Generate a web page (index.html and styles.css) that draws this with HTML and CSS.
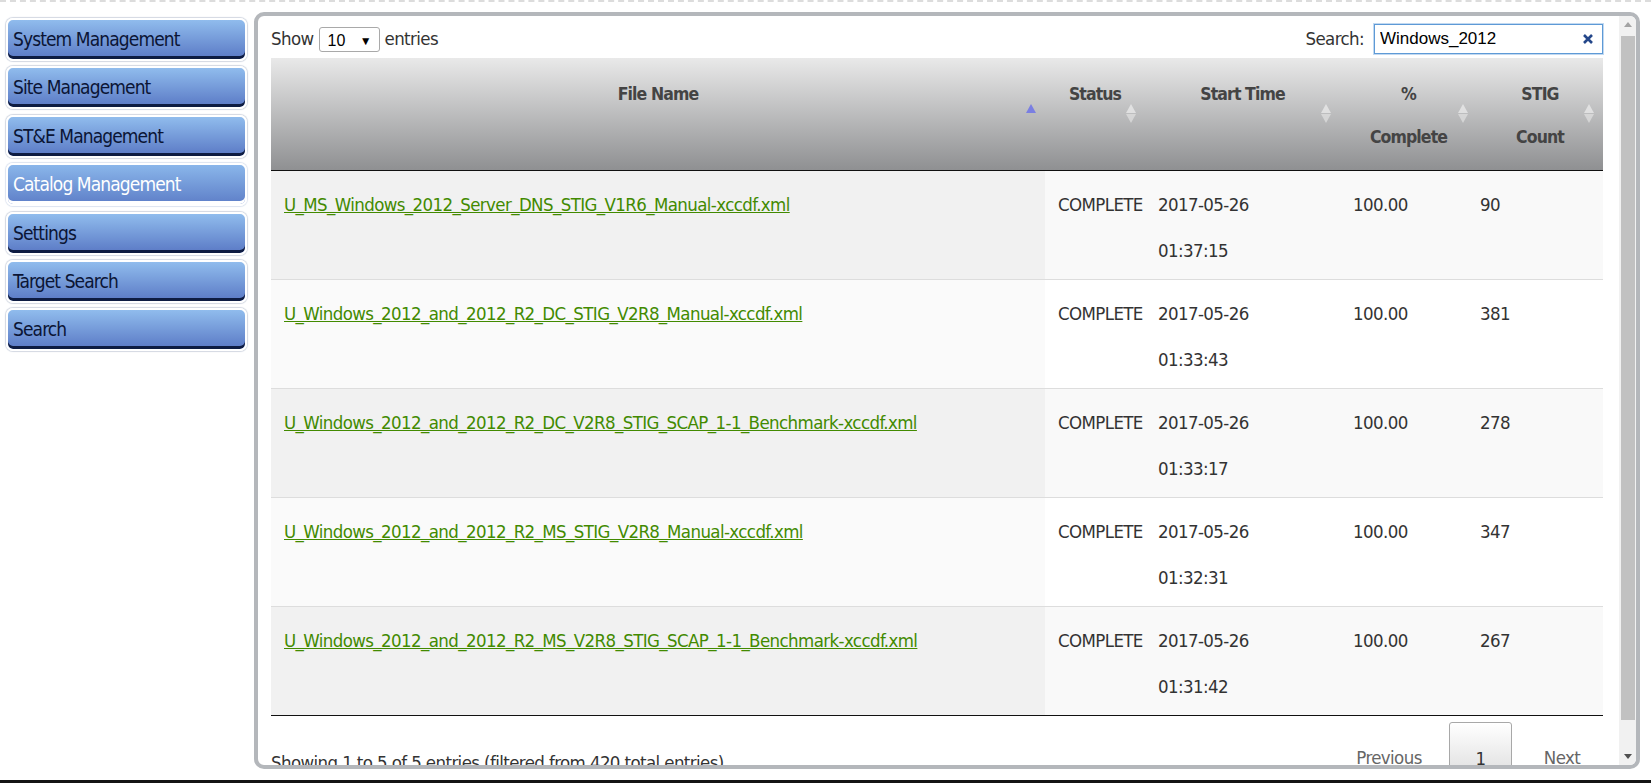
FILE: index.html
```html
<!DOCTYPE html>
<html>
<head>
<meta charset="utf-8">
<title>Catalog Management</title>
<link rel="stylesheet" href="styles.css">
</head>
<body>
<div class="page">
  <div class="topline"></div>
  <div class="layout">
    <nav class="sidebar">
      <a class="nav-btn">System Management</a>
      <a class="nav-btn">Site Management</a>
      <a class="nav-btn">ST&amp;E Management</a>
      <a class="nav-btn active">Catalog Management</a>
      <a class="nav-btn">Settings</a>
      <a class="nav-btn">Target Search</a>
      <a class="nav-btn">Search</a>
    </nav>
    <section class="panel">
      <div class="panel-content">
        <div class="controls">
          <div class="length">Show <span class="select"><span class="select-val">10</span><span class="caret">&#9660;</span></span> entries</div>
          <div class="filter">
            <span>Search:</span>
            <div class="search-box">
              <input class="search-input" type="text" value="Windows_2012">
              <svg class="clear" width="12" height="12" viewBox="0 0 12 12"><path d="M2 2 L10 10 M10 2 L2 10" stroke="#24478a" stroke-width="2.6" stroke-linecap="butt"/></svg>
            </div>
          </div>
        </div>
        <table class="grid">
          <colgroup>
            <col class="c-file"><col class="c-status"><col class="c-start"><col class="c-pct"><col class="c-count">
          </colgroup>
          <thead>
            <tr>
              <th>File Name<span class="sort asc"></span></th>
              <th>Status<span class="sort both"></span></th>
              <th>Start Time<span class="sort both"></span></th>
              <th>%<br>Complete<span class="sort both"></span></th>
              <th>STIG<br>Count<span class="sort both"></span></th>
            </tr>
          </thead>
          <tbody>
            <tr class="odd">
              <td class="sorted"><a href="#">U_MS_Windows_2012_Server_DNS_STIG_V1R6_Manual-xccdf.xml</a></td>
              <td>COMPLETE</td>
              <td>2017-05-26<br>01:37:15</td>
              <td>100.00</td>
              <td class="count">90</td>
            </tr>
            <tr class="even">
              <td class="sorted"><a href="#">U_Windows_2012_and_2012_R2_DC_STIG_V2R8_Manual-xccdf.xml</a></td>
              <td>COMPLETE</td>
              <td>2017-05-26<br>01:33:43</td>
              <td>100.00</td>
              <td class="count">381</td>
            </tr>
            <tr class="odd">
              <td class="sorted"><a href="#">U_Windows_2012_and_2012_R2_DC_V2R8_STIG_SCAP_1-1_Benchmark-xccdf.xml</a></td>
              <td>COMPLETE</td>
              <td>2017-05-26<br>01:33:17</td>
              <td>100.00</td>
              <td class="count">278</td>
            </tr>
            <tr class="even">
              <td class="sorted"><a href="#">U_Windows_2012_and_2012_R2_MS_STIG_V2R8_Manual-xccdf.xml</a></td>
              <td>COMPLETE</td>
              <td>2017-05-26<br>01:32:31</td>
              <td>100.00</td>
              <td class="count">347</td>
            </tr>
            <tr class="odd">
              <td class="sorted"><a href="#">U_Windows_2012_and_2012_R2_MS_V2R8_STIG_SCAP_1-1_Benchmark-xccdf.xml</a></td>
              <td>COMPLETE</td>
              <td>2017-05-26<br>01:31:42</td>
              <td>100.00</td>
              <td class="count">267</td>
            </tr>
          </tbody>
        </table>
        <div class="table-footer">
          <div class="info">Showing 1 to 5 of 5 entries (filtered from 420 total entries)</div>
          <div class="paginate">
            <span class="pg pg-prev">Previous</span>
            <span class="pg pg-current">1</span>
            <span class="pg pg-next">Next</span>
          </div>
        </div>
      </div>
      <div class="scrollbar">
        <div class="sb-arrow sb-up"></div>
        <div class="sb-track"><div class="sb-thumb"></div></div>
        <div class="sb-arrow sb-down"></div>
      </div>
    </section>
  </div>
  <div class="bottombar"></div>
</div>
</body>
</html>
```
FILE: styles.css
```css
html, body {
  margin: 0;
  padding: 0;
  background: #fff;
}
body {
  font-family: "Liberation Sans Narrow", "DejaVu Sans Condensed", "Liberation Sans", sans-serif;
  color: #333;
}
.page {
  width: 1651px;
  height: 783px;
  display: flex;
  flex-direction: column;
  overflow: hidden;
}
.topline {
  height: 3px;
  box-sizing: border-box;
  border-top: 2px dashed #dcdcdc;
  flex: none;
}
.layout {
  flex: 1;
  display: flex;
  align-items: flex-start;
}
.bottombar {
  height: 3px;
  background: #141414;
  flex: none;
}

/* Sidebar */
.sidebar {
  width: 241px;
  margin-left: 6px;
  padding-top: 15px;
  flex: none;
}
.nav-btn {
  display: block;
  height: 43px;
  box-sizing: border-box;
  margin-bottom: 5.4px;
  border: 2px solid #fff;
  border-radius: 7px;
  background: linear-gradient(#90bced, #5a79c5);
  box-shadow: inset 0 -3px 0 #0e1c42, 0 0 1px 1px #d3d8e2;
  padding: 1px 5px 0;
  line-height: 36px;
  font-size: 19px;
  letter-spacing: -0.9px;
  color: #0b1535;
  text-decoration: none;
  white-space: nowrap;
}
.nav-btn.active {
  color: #fff;
  background: linear-gradient(#8ab6ea, #5e7fc8);
  box-shadow: inset 0 -3px 0 #fff, 0 0 1px 1px #dde4f0;
}

/* Panel */
.panel {
  margin-left: 7px;
  margin-top: 9px;
  width: 1386px;
  height: 757px;
  box-sizing: border-box;
  border: 4px solid #b4b7bb;
  border-radius: 10px;
  display: flex;
  overflow: hidden;
  flex: none;
}
.panel-content {
  width: 1360px;
  box-sizing: border-box;
  padding: 0 15px 0 13px;
  overflow: hidden;
  flex: none;
}
.controls {
  height: 42px;
  display: flex;
  justify-content: space-between;
  align-items: flex-start;
  font-size: 18.5px;
  letter-spacing: -0.6px;
  color: #333;
}
.length {
  padding-top: 9px;
  display: flex;
  align-items: center;
  gap: 4px;
  line-height: 24px;
}
.select {
  width: 61px;
  height: 25px;
  box-sizing: border-box;
  border: 1px solid #a9a9a9;
  border-radius: 3px;
  display: inline-flex;
  align-items: center;
  justify-content: space-between;
  padding: 3px 7px 0 8px;
  font-family: "Liberation Sans", Arial, sans-serif;
  font-size: 16px;
  letter-spacing: 0;
  color: #000;
  margin: 2px 1px 0;
}
.caret {
  font-size: 12px;
}
.filter {
  padding-top: 8px;
  display: flex;
  align-items: center;
  gap: 10px;
}
.filter > span {
  line-height: 30px;
}
.search-box {
  width: 229px;
  height: 30px;
  box-sizing: border-box;
  border: 1px solid #5e9ad6;
  box-shadow: 0 0 0 1px rgba(120, 170, 225, 0.45);
  display: flex;
  align-items: center;
  padding: 0 8px 0 5px;
  background: #fff;
}
.search-input {
  flex: 1;
  min-width: 0;
  border: none;
  outline: none;
  padding: 0;
  font-family: "Liberation Sans", Arial, sans-serif;
  font-size: 17px;
  letter-spacing: 0;
  color: #000;
  background: transparent;
}
.clear {
  flex: none;
}

/* Table */
.grid {
  width: 1332px;
  table-layout: fixed;
  border-collapse: collapse;
  font-size: 18.5px;
  letter-spacing: -0.6px;
}
.c-file { width: 774px; }
.c-status { width: 100px; }
.c-start { width: 195px; }
.c-pct { width: 137px; }
.c-count { width: 126px; }
.grid th {
  position: relative;
  height: 112px;
  box-sizing: border-box;
  padding: 15px 13px 10px;
  vertical-align: top;
  line-height: 43px;
  font-size: 17.5px;
  letter-spacing: -0.9px;
  font-weight: bold;
  color: #444;
  text-align: center;
  background: linear-gradient(#e9e9e9, #8f9092);
  border-bottom: 1px solid #111;
}
.sort {
  position: absolute;
  right: 8px;
  top: 46px;
  width: 11px;
  height: 19px;
}
.sort::before,
.sort::after {
  content: "";
  position: absolute;
  left: 0;
  border-left: 5.5px solid transparent;
  border-right: 5.5px solid transparent;
}
.sort.both::before {
  top: 0;
  border-bottom: 9px solid rgba(235, 235, 235, 0.75);
}
.sort.both::after {
  bottom: 0;
  border-top: 9px solid rgba(225, 225, 225, 0.7);
}
.sort.asc::before {
  top: 0;
  border-bottom: 9px solid #7a7fe2;
}
.grid td {
  padding: 11px 13px 5px;
  vertical-align: top;
  line-height: 46px;
  color: #333;
  white-space: nowrap;
}
.grid tbody tr + tr td {
  border-top: 1px solid #ddd;
}
.grid tr.odd td { background: #f9f9f9; }
.grid tr.even td { background: #fff; }
.grid tr.odd td.sorted { background: #f1f1f1; }
.grid tr.even td.sorted { background: #fafafa; }
.grid td.count { padding-left: 3px; }
.grid a {
  color: #428a00;
  text-decoration: underline;
}

/* Footer */
.table-footer {
  border-top: 1px solid #111;
  display: flex;
  justify-content: space-between;
  align-items: flex-start;
  font-size: 18.5px;
  letter-spacing: -0.6px;
}
.info {
  padding-top: 32px;
  line-height: 30px;
  color: #333;
}
.paginate {
  display: flex;
  padding-top: 6px;
}
.pg {
  box-sizing: border-box;
  height: 60px;
  padding-top: 16px;
  line-height: 40px;
  text-align: center;
  color: #666;
}
.pg-prev { width: 102px; }
.pg-current {
  width: 63px;
  margin-left: 9px;
  border: 1px solid #a8a8a8;
  border-radius: 3px;
  background: linear-gradient(#fff, #dcdcdc);
  color: #333;
}
.pg-next {
  width: 82px;
  margin-left: 9px;
}

/* Fake scrollbar */
.scrollbar {
  width: 18px;
  flex: none;
  background: #f1f1f1;
  display: flex;
  flex-direction: column;
  margin-left: 1px;
}
.sb-arrow {
  height: 18px;
  flex: none;
  position: relative;
}
.sb-up::after,
.sb-down::after {
  content: "";
  position: absolute;
  left: 5px;
  border-left: 4px solid transparent;
  border-right: 4px solid transparent;
}
.sb-up::after {
  top: 6px;
  border-bottom: 5px solid #a3a3a3;
}
.sb-down::after {
  top: 7px;
  border-top: 5px solid #505050;
}
.sb-track {
  flex: 1;
  padding: 2px 2px 0;
}
.sb-thumb {
  height: 684px;
  background: #c1c1c1;
}
```
